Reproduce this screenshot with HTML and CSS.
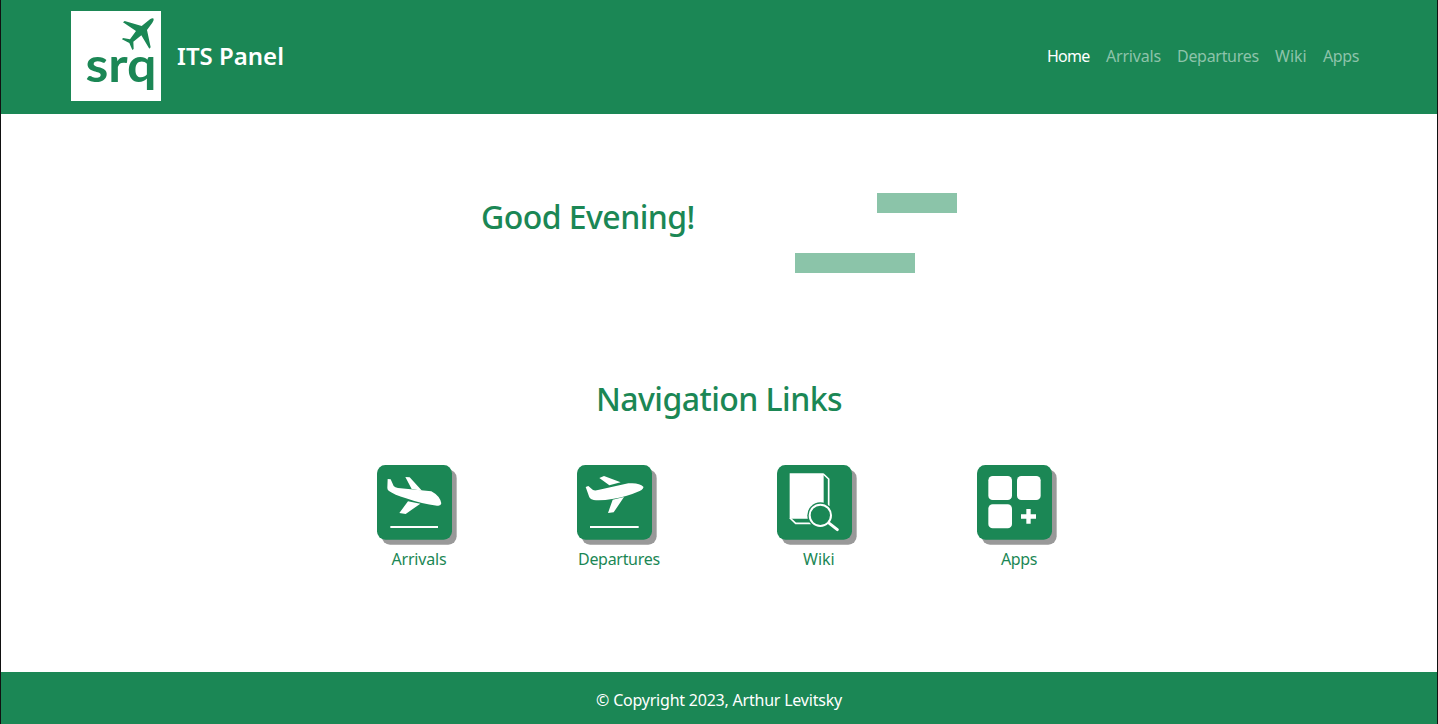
FILE: index.html
```html
<!DOCTYPE html>
<html lang="en">
<head>
<meta charset="utf-8">
<title>ITS Panel</title>
<link rel="stylesheet" href="styles.css">
</head>
<body>
<header class="header">
  <a class="brand">
    <svg class="logo" viewBox="0 0 90 90">
      <rect width="90" height="90" fill="#fff"/>
      <text class="logo-text" x="14.500" y="71" textLength="71" lengthAdjust="spacingAndGlyphs">srq</text>
      <path transform="translate(-11 -11.3) scale(.33333)" d="M281 57Q278 54 270 59L245 79L194 64L189 68L228 94L210 119L189 115L186 119L208 130L217 151L221 148L220 126L244 107L268 147L272 143L261 91L277 69Q282 61 281 57Z"/>
    </svg>
    <span class="brand-name">ITS Panel</span>
  </a>
  <nav class="nav">
    <a class="nav-link home active">Home</a>
    <a class="nav-link arrivals">Arrivals</a>
    <a class="nav-link departures">Departures</a>
    <a class="nav-link wiki">Wiki</a>
    <a class="nav-link apps">Apps</a>
  </nav>
</header>
<main class="main">
  <section class="welcome">
    <h1 class="title greeting">Good Evening!</h1>
    <div class="bars"><div class="bar bar-short"></div><div class="bar bar-long"></div></div>
  </section>
  <h2 class="title links-title">Navigation Links</h2>
  <section class="tiles">
    <a class="tile">
      <svg class="icon" viewBox="33 27 240 240">
        <rect class="shadow" x="47" y="41" width="225" height="225" rx="25"/>
        <rect class="face" x="33" y="27" width="225" height="224" rx="25"/>
        <path d="M65 69L74 70L83 90Q87 95 96 96L196 106Q222 120 226 142Q225 151 213 149Q167 144 120 127Q84 116 69 105Q64 102 64 96Z"/>
        <path d="M118 63L131 64L168 104L137 99ZM126 136L163 143L119 174L100 171Z"/>
        <rect x="73" y="210" width="143" height="6"/>
      </svg>
      <span class="tile-label arrivals">Arrivals</span>
    </a>
    <a class="tile">
      <svg class="icon" viewBox="33 27 240 240">
        <rect class="shadow" x="47" y="41" width="225" height="225" rx="25"/>
        <rect class="face" x="33" y="27" width="225" height="224" rx="25"/>
        <path d="M59 93L67 90L80 101Q86 105 96 102L187 82Q220 79 232 92Q234 98 221 105Q183 122 143 128Q105 135 83 132Q73 131 70 124Z"/>
        <path d="M100 66L114 60L164 79L130 88ZM140 131L174 123L143 169L126 171Z"/>
        <rect x="72" y="210" width="146" height="6"/>
      </svg>
      <span class="tile-label departures">Departures</span>
    </a>
    <a class="tile">
      <svg class="icon" viewBox="33 27 240 240">
        <rect class="shadow" x="47" y="41" width="225" height="225" rx="25"/>
        <rect class="face" x="33" y="27" width="225" height="224" rx="25"/>
        <path d="M71 52H173V188H71Z"/>
        <path class="line" d="M72 186L89 202H140M172 54L188 69V150"/>
        <circle class="gap" cx="163" cy="178" r="39"/>
        <path class="handle" d="M190 202L214 221"/>
        <circle class="lens" cx="163" cy="178" r="32"/>
      </svg>
      <span class="tile-label wiki">Wiki</span>
    </a>
    <a class="tile">
      <svg class="icon" viewBox="33 27 240 240">
        <rect class="shadow" x="47" y="41" width="225" height="225" rx="25"/>
        <rect class="face" x="33" y="27" width="225" height="224" rx="25"/>
        <rect x="67" y="60" width="71" height="72" rx="13"/>
        <rect x="153" y="60" width="71" height="72" rx="13"/>
        <rect x="67" y="145" width="71" height="72" rx="13"/>
        <path d="M181 159H194V175H210V188H194V203H181V188H165V175H181Z"/>
      </svg>
      <span class="tile-label apps">Apps</span>
    </a>
  </section>
</main>
<footer class="footer"><span class="copyright">© Copyright 2023, Arthur Levitsky</span></footer>
</body>
</html>
```
FILE: styles.css
```css
* { box-sizing: border-box; }
body {
  margin: 0;
  height: 724px;
  display: flex;
  flex-direction: column;
  border-left: 1px solid #111;
  border-right: 1px solid #111;
  background: #fff;
  color: #1b8755;
  font: 16px/24px "Noto Sans", "Open Sans", sans-serif;
  white-space: nowrap;
  overflow: hidden;
}
.header {
  height: 114px;
  padding: 0 70px 2px;
  display: flex;
  align-items: center;
  justify-content: space-between;
  background: #1b8755;
  color: #fff;
}
.brand { display: flex; align-items: center; gap: 16px; }
.logo { width: 90px; height: 90px; fill: #1b8755; }
.logo-text { font: 700 47px Lato, sans-serif; }
.brand-name { font-size: 24px; font-weight: 600; letter-spacing: 0; }
.nav { display: flex; gap: 16px; padding-right: 8px; }
.nav-link { color: #8dc3aa; }
.nav-link.active { color: #fff; }
.home { width: 43px; letter-spacing: -0.75px; }
.arrivals { width: 55px; letter-spacing: -0.2px; }
.departures { width: 82px; letter-spacing: -0.3px; }
.wiki { width: 32px; letter-spacing: 0; }
.apps { width: 36px; letter-spacing: -0.4px; }
.main { flex: 1; display: flex; flex-direction: column; align-items: center; }
.welcome {
  width: 476px;
  height: 80px;
  margin-top: 79px;
  display: flex;
  justify-content: space-between;
}
.title { margin: 0; font-size: 32px; line-height: 38px; font-weight: 500; }
.greeting { padding-top: 5px; letter-spacing: -0.55px; }
.bars { width: 162px; display: flex; flex-direction: column; justify-content: space-between; }
.bar { height: 20px; background: #8bc4a9; }
.bar-short { width: 80px; align-self: flex-end; }
.bar-long { width: 120px; }
.links-title { margin-top: 107px; letter-spacing: -0.55px; }
.tiles { display: flex; gap: 120px; margin-top: 47px; }
.tile { width: 80px; display: flex; flex-direction: column; align-items: center; }
.icon { width: 80px; height: 80px; margin-left: -4px; fill: #fff; }
.shadow { fill: #999; }
.face { fill: #1b8755; }
.gap { fill: #1b8755; }
.line { fill: none; stroke: #fff; stroke-width: 5; }
.lens { fill: #1b8755; stroke: #fff; stroke-width: 6; }
.handle { stroke: #fff; stroke-width: 9; stroke-linecap: round; }
.tile-label { margin-top: 2px; }
.footer {
  height: 52px;
  padding-top: 16px;
  text-align: center;
  background: #1b8755;
  color: #fff;
}
.copyright { letter-spacing: -0.22px; }
```
